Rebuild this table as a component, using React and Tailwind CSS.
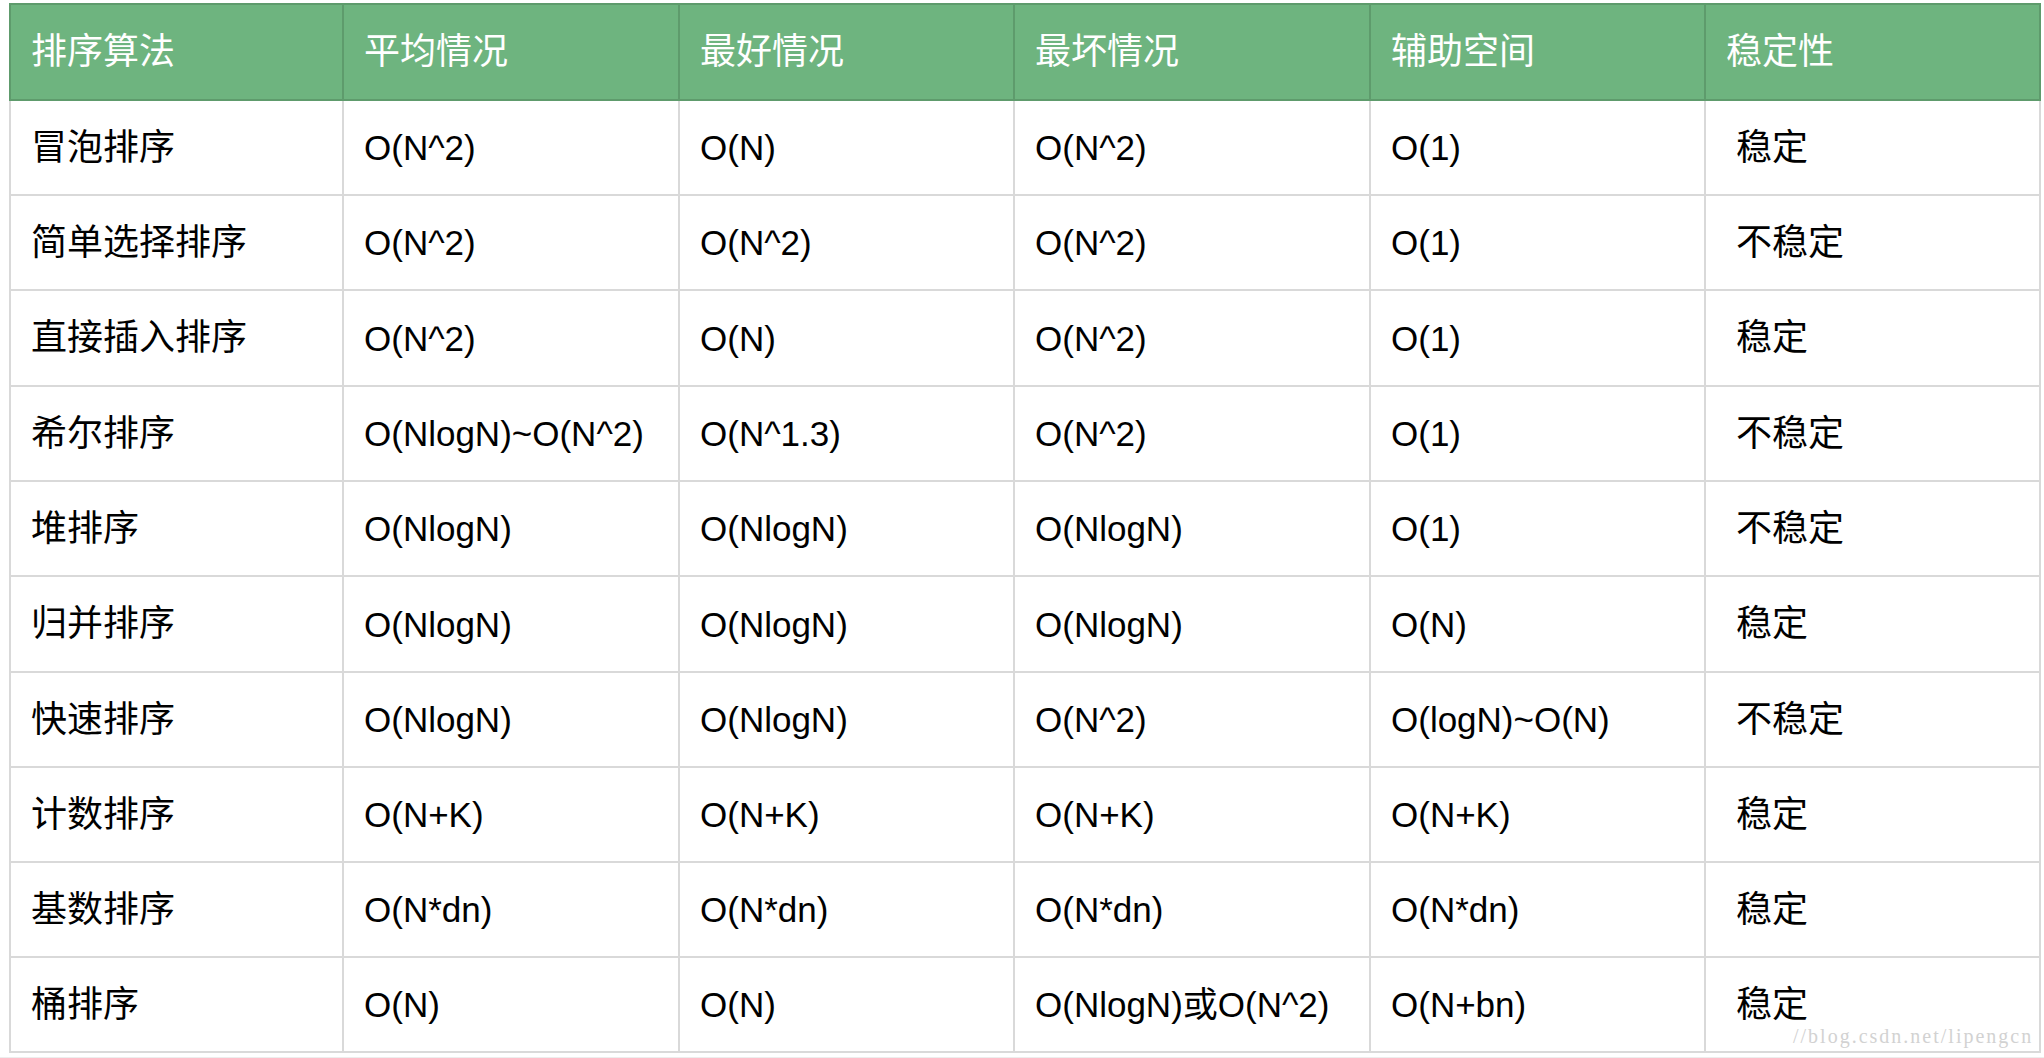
import React from "react";

const header = ["排序算法", "平均情况", "最好情况", "最坏情况", "辅助空间", "稳定性"];

const rows = [
  ["冒泡排序", "O(N^2)", "O(N)", "O(N^2)", "O(1)", "稳定"],
  ["简单选择排序", "O(N^2)", "O(N^2)", "O(N^2)", "O(1)", "不稳定"],
  ["直接插入排序", "O(N^2)", "O(N)", "O(N^2)", "O(1)", "稳定"],
  ["希尔排序", "O(NlogN)~O(N^2)", "O(N^1.3)", "O(N^2)", "O(1)", "不稳定"],
  ["堆排序", "O(NlogN)", "O(NlogN)", "O(NlogN)", "O(1)", "不稳定"],
  ["归并排序", "O(NlogN)", "O(NlogN)", "O(NlogN)", "O(N)", "稳定"],
  ["快速排序", "O(NlogN)", "O(NlogN)", "O(N^2)", "O(logN)~O(N)", "不稳定"],
  ["计数排序", "O(N+K)", "O(N+K)", "O(N+K)", "O(N+K)", "稳定"],
  ["基数排序", "O(N*dn)", "O(N*dn)", "O(N*dn)", "O(N*dn)", "稳定"],
  ["桶排序", "O(N)", "O(N)", "O(NlogN)或O(N^2)", "O(N+bn)", "稳定"],
];

const widths = ["w-[333px]", "w-[336px]", "w-[335px]", "w-[356px]", "w-[335px]", "w-[337px]"];

export default function App() {
  return (
    <div
      className="relative w-[2044px] h-[1058px] overflow-hidden bg-white text-black"
      style={{ fontFamily: '"Liberation Sans", "Noto Sans CJK SC", sans-serif' }}
    >
      <div className="pt-[3px] pl-[9px]">
        <div className="flex flex-col w-[2032px]">
          {/* header */}
          <div className="flex h-[98px] bg-[#6eb47f] border-t-2 border-b-2 border-[#5e9b6c]">
            {header.map((h, i) => (
              <div
                key={i}
                className={`${widths[i]} shrink-0 flex items-center pl-[20px] border-l-2 border-[#5e9b6c] text-white text-[36px] leading-none ${
                  i === 5 ? "border-r-2" : ""
                }`}
              >
                {h}
              </div>
            ))}
          </div>
          {/* body */}
          {rows.map((r, ri) => (
            <div
              key={ri}
              className={`flex border-b-2 border-[#d9d9d9] ${
                ri === 2 || ri === 5 ? "h-[96px]" : "h-[95px]"
              }`}
            >
              {r.map((c, ci) => (
                <div
                  key={ci}
                  className={`${widths[ci]} shrink-0 flex items-center border-l-2 border-[#d9d9d9] leading-none whitespace-nowrap ${
                    ci === 0 || ci === 5 ? "text-[36px]" : "text-[35px]"
                  } ${ci === 5 ? "border-r-2 pl-[30px]" : "pl-[20px]"}`}
                >
                  {c}
                </div>
              ))}
            </div>
          ))}
        </div>
      </div>
      <div className="mt-[4px] h-px w-full bg-[#ededed]" />
      <div
        className="absolute left-[1793px] top-[1026px] text-[20px] leading-[20px] tracking-[2px] text-[#d2d2d2] whitespace-nowrap"
        style={{ fontFamily: '"Liberation Serif", serif' }}
      >
        //blog.csdn.net/lipengcn
      </div>
    </div>
  );
}
